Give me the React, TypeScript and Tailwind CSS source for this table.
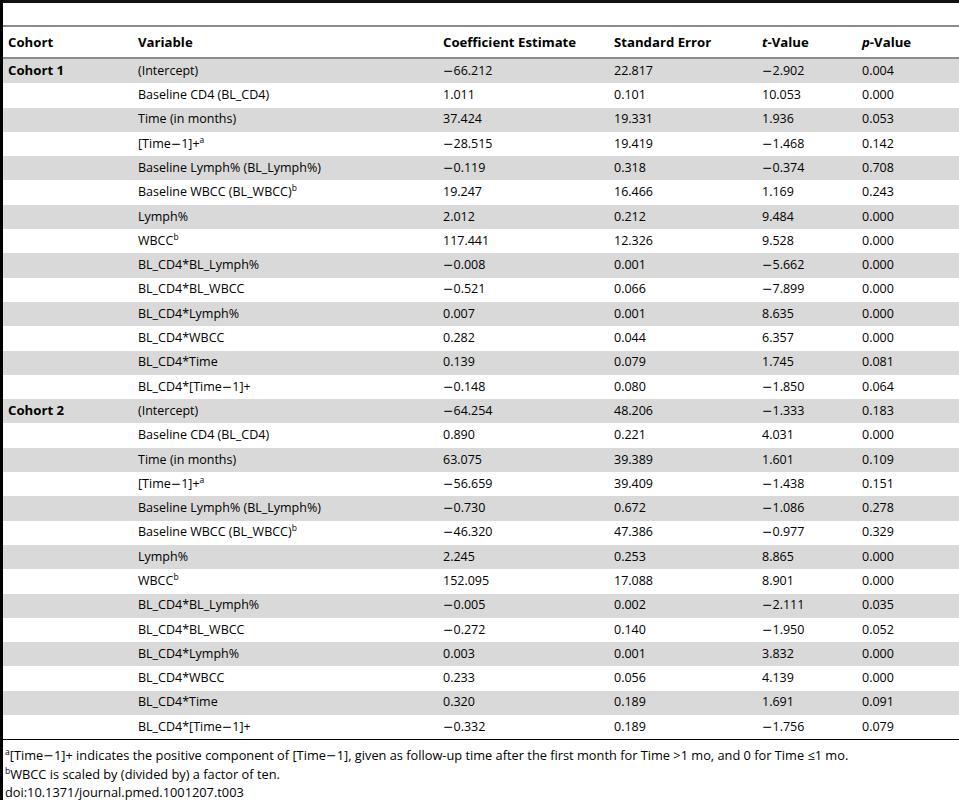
import React from "react";

type Row = [string, React.ReactNode, string, string, string, string];

const sup = (s: string) => <span className="text-[8.5px] relative top-[-5px] leading-none">{s}</span>;

// the source uses a wide math minus, wider than Open Sans draws it
const m = (s: string) =>
  s.split("−").map((part, i) => (
    <React.Fragment key={i}>
      {i > 0 && <span className="font-['DejaVu_Sans',sans-serif]">−</span>}
      {part}
    </React.Fragment>
  ));

const rows: Row[] = [
  ["Cohort 1", "(Intercept)", "−66.212", "22.817", "−2.902", "0.004"],
  ["", "Baseline CD4 (BL_CD4)", "1.011", "0.101", "10.053", "0.000"],
  ["", "Time (in months)", "37.424", "19.331", "1.936", "0.053"],
  ["", <>{m("[Time−1]+")}{sup("a")}</>, "−28.515", "19.419", "−1.468", "0.142"],
  ["", "Baseline Lymph% (BL_Lymph%)", "−0.119", "0.318", "−0.374", "0.708"],
  ["", <>Baseline WBCC (BL_WBCC){sup("b")}</>, "19.247", "16.466", "1.169", "0.243"],
  ["", "Lymph%", "2.012", "0.212", "9.484", "0.000"],
  ["", <>WBCC{sup("b")}</>, "117.441", "12.326", "9.528", "0.000"],
  ["", "BL_CD4*BL_Lymph%", "−0.008", "0.001", "−5.662", "0.000"],
  ["", "BL_CD4*BL_WBCC", "−0.521", "0.066", "−7.899", "0.000"],
  ["", "BL_CD4*Lymph%", "0.007", "0.001", "8.635", "0.000"],
  ["", "BL_CD4*WBCC", "0.282", "0.044", "6.357", "0.000"],
  ["", "BL_CD4*Time", "0.139", "0.079", "1.745", "0.081"],
  ["", m("BL_CD4*[Time−1]+"), "−0.148", "0.080", "−1.850", "0.064"],
  ["Cohort 2", "(Intercept)", "−64.254", "48.206", "−1.333", "0.183"],
  ["", "Baseline CD4 (BL_CD4)", "0.890", "0.221", "4.031", "0.000"],
  ["", "Time (in months)", "63.075", "39.389", "1.601", "0.109"],
  ["", <>{m("[Time−1]+")}{sup("a")}</>, "−56.659", "39.409", "−1.438", "0.151"],
  ["", "Baseline Lymph% (BL_Lymph%)", "−0.730", "0.672", "−1.086", "0.278"],
  ["", <>Baseline WBCC (BL_WBCC){sup("b")}</>, "−46.320", "47.386", "−0.977", "0.329"],
  ["", "Lymph%", "2.245", "0.253", "8.865", "0.000"],
  ["", <>WBCC{sup("b")}</>, "152.095", "17.088", "8.901", "0.000"],
  ["", "BL_CD4*BL_Lymph%", "−0.005", "0.002", "−2.111", "0.035"],
  ["", "BL_CD4*BL_WBCC", "−0.272", "0.140", "−1.950", "0.052"],
  ["", "BL_CD4*Lymph%", "0.003", "0.001", "3.832", "0.000"],
  ["", "BL_CD4*WBCC", "0.233", "0.056", "4.139", "0.000"],
  ["", "BL_CD4*Time", "0.320", "0.189", "1.691", "0.091"],
  ["", m("BL_CD4*[Time−1]+"), "−0.332", "0.189", "−1.756", "0.079"],
];

const cols = "grid grid-cols-[130px_305px_171px_148px_100px_1fr]";

export default function App() {
  return (
    <div className="w-[959px] h-[800px] bg-white text-black border-l-[3px] border-black font-['Open_Sans',sans-serif] text-[12.5px] overflow-hidden">
      <div className="border-t-[3px] border-[#111] h-[25px]" />

      {/* header */}
      <div className={`${cols} h-[34px] items-center pt-[2px] border-t-2 border-b-2 border-[#8c8c8c] font-bold text-[13.2px]`}>
        <div className="pl-[5px]">Cohort</div>
        <div className="pl-[5px]">Variable</div>
        <div className="pl-[5px]">Coefficient Estimate</div>
        <div className="pl-[5px]">Standard Error</div>
        <div className="pl-[5px]"><i>t</i>-Value</div>
        <div className="pl-[5px]"><i>p</i>-Value</div>
      </div>

      {/* body */}
      <div className="border-b border-black">
        {rows.map((r, i) => (
          <div key={i} className={`${cols} h-[24.3px] items-center ${i % 2 === 0 ? "bg-[#d9d9d9]" : "bg-white"}`}>
            <div className="pl-[5px] font-bold text-[13.2px]">{r[0]}</div>
            <div className="pl-[5px]">{r[1]}</div>
            <div className="pl-[5px]">{m(r[2])}</div>
            <div className="pl-[5px]">{m(r[3])}</div>
            <div className="pl-[5px]">{m(r[4])}</div>
            <div className="pl-[5px]">{m(r[5])}</div>
          </div>
        ))}
      </div>

      {/* footnotes */}
      <div className="pt-[6px] pl-[2px] leading-[18px] text-[12.8px]">
        <p>{sup("a")}{m("[Time−1]+ indicates the positive component of [Time−1], given as follow-up time after the first month for Time >1 mo, and 0 for Time ≤1 mo.")}</p>
        <p>{sup("b")}WBCC is scaled by (divided by) a factor of ten.</p>
        <p>doi:10.1371/journal.pmed.1001207.t003</p>
      </div>
    </div>
  );
}
